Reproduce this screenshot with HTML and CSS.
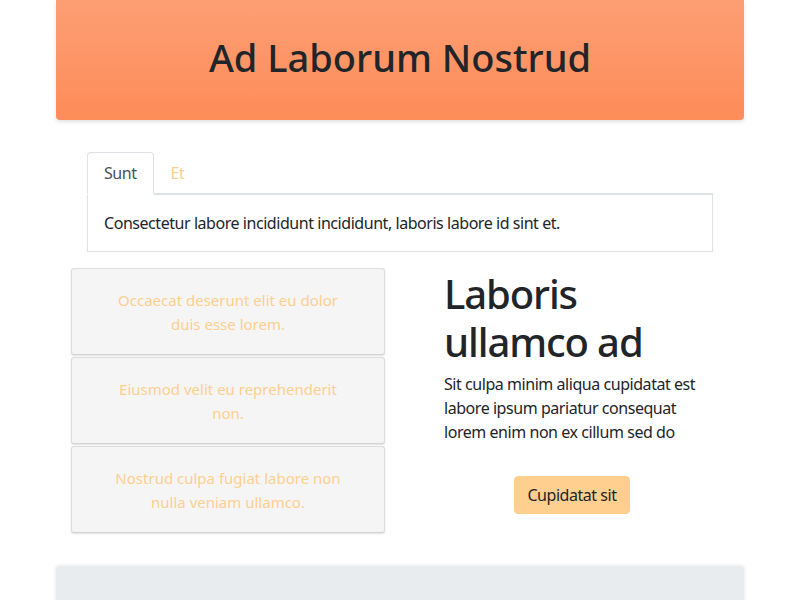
FILE: index.html
```html
<!DOCTYPE html>
<html>
<head>
<meta charset="utf-8">
<link rel="stylesheet" href="styles.css">
</head>
<body>
<div class="container">
  <header class="hero">
    <h1>Ad Laborum Nostrud</h1>
  </header>

  <section class="tabs">
    <nav class="tab-nav">
      <a class="tab active">Sunt</a>
      <a class="tab">Et</a>
    </nav>
    <div class="tab-content">Consectetur labore incididunt incididunt, laboris labore id sint et.</div>
  </section>

  <div class="row">
    <div class="col">
      <div class="card">Occaecat deserunt elit eu dolor duis esse lorem.</div>
      <div class="card">Eiusmod velit eu reprehenderit non.</div>
      <div class="card">Nostrud culpa fugiat labore non nulla veniam ullamco.</div>
    </div>
    <div class="col col-text">
      <div class="text">
        <h2>Laboris ullamco ad</h2>
        <p>Sit culpa minim aliqua cupidatat est labore ipsum pariatur consequat lorem enim non ex cillum sed do</p>
      </div>
      <button class="btn">Cupidatat sit</button>
    </div>
  </div>

  <footer class="footer"></footer>
</div>
</body>
</html>
```

FILE: styles.css
```css
* { box-sizing: border-box; }
html, body { margin: 0; padding: 0; }
body {
  font-family: "Noto Sans", "Open Sans", sans-serif;
  font-size: 16px;
  line-height: 1.5;
  color: #212529;
  background: #fff;
  letter-spacing: -0.45px;
}
.container {
  width: 688px;
  margin: 0 auto;
}
.hero {
  height: 120px;
  background: linear-gradient(to bottom, #fd9e73, #fd8c59);
  border-radius: 0 0 4px 4px;
  box-shadow: 0 2px 4px rgba(0,0,0,0.12);
  display: flex;
  align-items: center;
  justify-content: center;
}
.hero h1 {
  margin: 0 0 4px;
  font-size: 38px;
  font-weight: 500;
  line-height: 1.2;
  letter-spacing: 0;
}
.tabs {
  margin: 32px 31px 16px;
}
.tab-nav {
  display: flex;
  border-bottom: 2px solid #dee2e6;
}
.tab {
  display: block;
  padding: 8px 16px;
  margin-bottom: -2px;
  border: 1px solid transparent;
  border-radius: 4px 4px 0 0;
  color: #fdcf8f;
  line-height: 24px;
}
.tab.active {
  color: #495057;
  border-color: #dee2e6 #dee2e6 #fff;
  border-bottom: 2px solid #fff;
}
.tab-content {
  border: 1px solid #dee2e6;
  border-top: 0;
  padding: 16px 16px;
  line-height: 24px;
}
.row {
  display: flex;
}
.col {
  flex: 1 1 0;
  padding: 0 15px;
}
.card {
  height: 87px;
  margin-bottom: 2px;
  background: #f5f5f5;
  border: 1px solid #ddd;
  border-bottom-color: #d3d3d3;
  border-radius: 3px;
  box-shadow: 0 1px 2px rgba(0,0,0,0.12);
  color: #fecf8f;
  text-align: center;
  display: flex;
  align-items: center;
  justify-content: center;
  padding: 0 42px;
  font-size: 15px;
  line-height: 24px;
  letter-spacing: 0;
}
.col-text {
  display: flex;
  flex-direction: column;
  align-items: center;
}
.text {
  align-self: stretch;
  padding: 0 29px;
}
.text h2 {
  margin: 2px 0 6px;
  font-size: 40px;
  font-weight: 500;
  line-height: 48px;
  letter-spacing: -1.1px;
}
.text p {
  margin: 0;
  line-height: 24px;
}
.btn {
  margin-top: 32px;
  font: inherit;
  letter-spacing: -0.45px;
  color: #212529;
  background: #fecf8f;
  border: 1px solid #fecf8f;
  border-radius: 4px;
  padding: 6px 12px;
  line-height: 24px;
}
.footer {
  margin-top: 31px;
  height: 60px;
  background: #e9ecef;
  border-radius: 4px 4px 0 0;
  box-shadow: 0 0 4px rgba(0,0,0,0.12);
}
```
